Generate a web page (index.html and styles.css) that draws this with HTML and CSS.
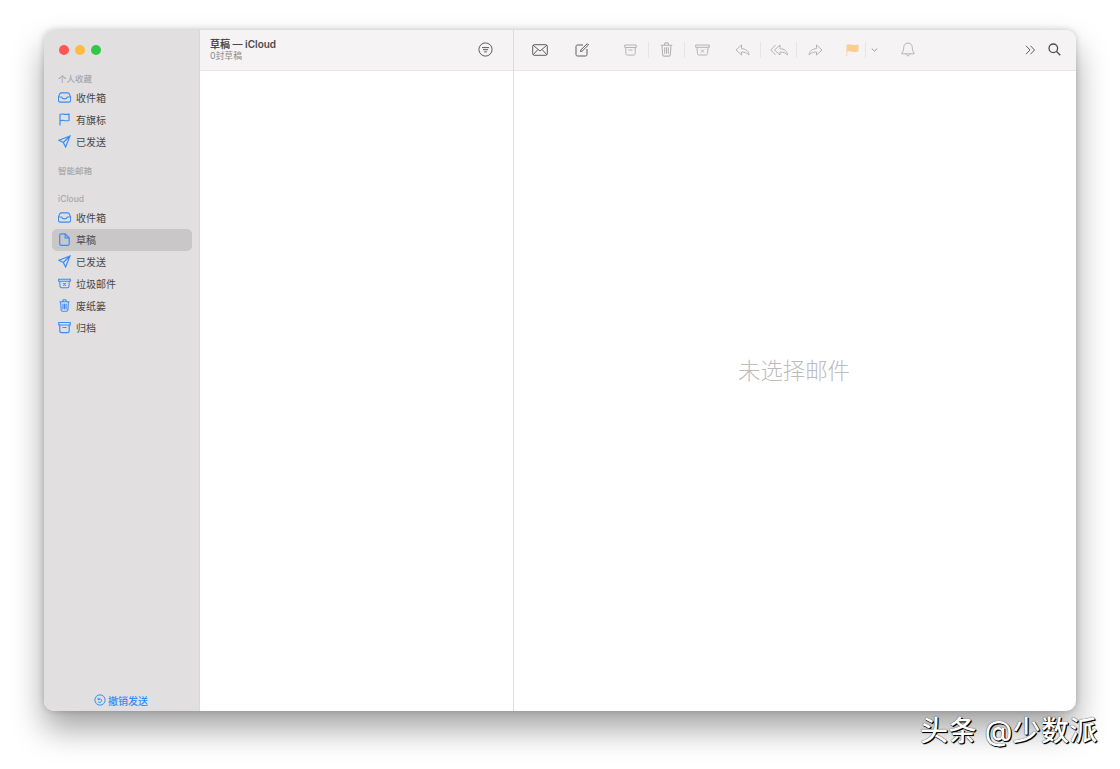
FILE: index.html
```html
<!DOCTYPE html>
<html lang="zh-CN">
<head>
    <meta charset="UTF-8">
    <meta name="viewport" content="width=device-width, initial-scale=1.0">
    <title>草稿 — iCloud</title>
    <link rel="stylesheet" href="styles.css">
</head>
<body>
    <svg class="defs" width="0" height="0">
        <symbol id="i-inbox" viewBox="0 0 14 12">
            <path d="M3.4 1h7.2c.6 0 1 .3 1.3.8l1.6 3.5v3.9c0 1-.7 1.8-1.8 1.8H2.3C1.2 11 .5 10.200.5 9.200V5.300l1.600-3.500C2.400 1.300 2.800 1 3.400 1z"/>
            <path d="M.6 5.500h3.300c.5 1.300 1.600 2 3.100 2s2.600-.7 3.100-2h3.300"/>
        </symbol>
        <symbol id="i-flag" viewBox="0 0 12 13">
            <path d="M1.500 12.500V1.500c1-.5 2-.6 3.200-.4 1.500.3 3 .7 5.800.1v6.300c-2.800.6-4.300.2-5.800-.1-1.200-.2-2.200-.1-3.200.4"/>
        </symbol>
        <symbol id="i-sent" viewBox="0 0 13 13">
            <path d="M12 1L1 5.300l4.300 2.200L7.600 12zM12 1L5.300 7.500"/>
        </symbol>
        <symbol id="i-draft" viewBox="0 0 11 13">
            <path d="M2.300.8h3.900l4 4v5.900c0 1-.6 1.600-1.600 1.600H2.300c-1 0-1.600-.6-1.600-1.600V2.400c0-1 .6-1.600 1.600-1.600zM6.200.8v4h4"/>
        </symbol>
        <symbol id="i-junk" viewBox="0 0 15 12">
            <path d="M.7 1h13.600v2.300H.7zM2 3.300l.4 6.200c.1 1 .7 1.500 1.600 1.500h7c.9 0 1.500-.5 1.600-1.500l.4-6.200M6 5.500l3 3M9 5.500l-3 3"/>
        </symbol>
        <symbol id="i-trash" viewBox="0 0 12 14">
            <path d="M.6 3h10.800M4.200 3V1.800c0-.6.4-1 1-1h1.600c.6 0 1 .4 1 1V3M1.800 3l.6 8.800c.1.8.6 1.400 1.400 1.400h4.400c.8 0 1.300-.6 1.400-1.400l.6-8.800M4.300 5v6M6 5v6M7.700 5v6"/>
        </symbol>
        <symbol id="i-archive" viewBox="0 0 13 12">
            <path d="M.8 1h11.400v2.500H.8zM1.800 3.500v6c0 1 .6 1.600 1.600 1.600h6.200c1 0 1.600-.6 1.600-1.600v-6M4.500 6h4"/>
        </symbol>
        <symbol id="i-reply" viewBox="0 0 15 12">
            <path d="M6.500 1L1 6l5.500 5V8c3.200 0 5.500.8 7.500 3-.4-3.800-3-6.200-7.500-6.300z"/>
        </symbol>
        <symbol id="i-replyall" viewBox="0 0 19 12">
            <path d="M5.500 1L.8 6l4.700 5M10 1L4.500 6l5.500 5V8c3.200 0 5.500.8 7.500 3-.4-3.800-3-6.200-7.500-6.300z"/>
        </symbol>
        <symbol id="i-forward" viewBox="0 0 15 12">
            <path d="M8.500 1L14 6l-5.500 5V8C5.300 8 3 8.800 1 11c.4-3.800 3-6.200 7.500-6.300z"/>
        </symbol>
    </svg>

    <div class="window">
        <aside class="sidebar">
            <div class="traffic">
                <span class="dot red"></span>
                <span class="dot yellow"></span>
                <span class="dot green"></span>
            </div>

            <div class="label first">个人收藏</div>
            <div class="row"><svg class="side-icon"><use href="#i-inbox"/></svg>收件箱</div>
            <div class="row"><svg class="side-icon"><use href="#i-flag"/></svg>有旗标</div>
            <div class="row"><svg class="side-icon"><use href="#i-sent"/></svg>已发送</div>

            <div class="label smart">智能邮箱</div>

            <div class="label cloud">iCloud</div>
            <div class="row"><svg class="side-icon"><use href="#i-inbox"/></svg>收件箱</div>
            <div class="row active"><svg class="side-icon"><use href="#i-draft"/></svg>草稿</div>
            <div class="row"><svg class="side-icon"><use href="#i-sent"/></svg>已发送</div>
            <div class="row"><svg class="side-icon"><use href="#i-junk"/></svg>垃圾邮件</div>
            <div class="row"><svg class="side-icon"><use href="#i-trash"/></svg>废纸篓</div>
            <div class="row"><svg class="side-icon"><use href="#i-archive"/></svg>归档</div>

            <div class="undo">
                <svg class="undo-icon" viewBox="0 0 11 11">
                    <circle cx="5.500" cy="5.500" r="4.700"/>
                    <path d="M3.800 7.300c1 .8 3.200.5 3.200-1.300S4.800 4.200 3.900 5M3.700 3.400V5.100h1.700"/>
                </svg>
                撤销发送
            </div>
        </aside>

        <section class="list">
            <header class="list-head">
                <div class="list-title">
                    <div class="title">草稿 — iCloud</div>
                    <div class="subtitle">0封草稿</div>
                </div>
                <svg class="filter" viewBox="0 0 15 15">
                    <circle cx="7.500" cy="7.500" r="6.600"/>
                    <path d="M4 5.600h7M5 7.700h5M6.200 9.800h2.600"/>
                </svg>
            </header>
        </section>

        <main class="reader">
            <header class="toolbar">
                <svg class="tool dark envelope" viewBox="0 0 16 12">
                    <rect x=".7" y=".7" width="14.600" height="10.600" rx="1.600"/>
                    <path d="M1.200 1.300L8 7l6.800-5.700M1.200 10.800l4.700-5.300M14.800 10.800l-4.700-5.300"/>
                </svg>
                <svg class="tool dark compose" viewBox="0 0 14 14">
                    <path d="M8 2H2.500C1.500 2 1 2.500 1 3.500v8c0 1 .5 1.500 1.500 1.500h8c1 0 1.500-.5 1.500-1.500V6M5.500 8.500l.4-1.700L12.300.7l1.200 1.200-6.300 6.200z"/>
                </svg>

                <div class="group first-group">
                    <svg class="tool faint"><use href="#i-archive" x="4" y="3" width="13" height="12"/></svg>
                    <span class="divider"></span>
                    <svg class="tool faint"><use href="#i-trash" x="4" y="1" width="13" height="15"/></svg>
                    <span class="divider"></span>
                    <svg class="tool faint"><use href="#i-junk" x="2.500" y="3" width="16" height="12"/></svg>
                </div>

                <div class="group reply-group">
                    <svg class="tool faint"><use href="#i-reply" x="3" y="3" width="15" height="12"/></svg>
                    <span class="divider"></span>
                    <svg class="tool faint"><use href="#i-replyall" x="2" y="3" width="19" height="12"/></svg>
                    <span class="divider"></span>
                    <svg class="tool faint"><use href="#i-forward" x="4" y="3" width="15" height="12"/></svg>
                </div>

                <svg class="flag" viewBox="0 0 13 12">
                    <path d="M.5 12V.8C2 .2 3.500.1 5 .5c2.500.6 4.500.8 7.500.1v7c-3 .7-5 .5-7.500-.1-1.500-.4-2.700-.3-3.800.2V12z"/>
                </svg>
                <span class="divider flag-div"></span>
                <svg class="chevron" viewBox="0 0 7 4"><path d="M.8.6L3.500 3.200 6.200.6"/></svg>
                <svg class="tool faint bell" viewBox="0 0 14 15">
                    <path d="M7 1c-2.700 0-4.200 2-4.300 4.500-.1 2.700-.5 4-1.900 5.700-.2.300 0 .6.300.6h11.800c.3 0 .5-.3.300-.6-1.400-1.700-1.800-3-1.900-5.700C11.200 3 9.700 1 7 1zM5.300 11.900c.1 1.100.8 1.900 1.700 1.900s1.600-.8 1.700-1.900"/>
                </svg>

                <div class="spacer"></div>
                <svg class="more" viewBox="0 0 11 10"><path d="M1 .8L5 5 1 9.200M5.500.8L9.500 5 5.500 9.200"/></svg>
                <svg class="search" viewBox="0 0 13 13"><circle cx="5.300" cy="5.300" r="4.300"/><path d="M8.500 8.500l3.800 3.800"/></svg>
            </header>
            <div class="empty">未选择邮件</div>
        </main>
    </div>

    <div class="watermark">头条 @少数派</div>
</body>
</html>
```

FILE: styles.css
```css
* {
    box-sizing: border-box;
}
html, body {
    margin: 0;
    height: 100%;
    overflow: hidden;
}
body {
    padding: 30px 44px 58px;
    background-color: #fff;
    font-family: "Inter", "Noto Sans CJK SC", sans-serif;
}
.defs {
    position: absolute;
}
.window {
    display: flex;
    height: 681px;
    border-radius: 10px;
    overflow: hidden;
    background-color: #fff;
    box-shadow: 0 18px 32px rgba(0, 0, 0, 0.36), 0 0 6px rgba(0, 0, 0, 0.2);
}

/* sidebar */
.sidebar {
    display: flex;
    flex-direction: column;
    flex: none;
    width: 156px;
    padding: 0 7px 0 8px;
    background-color: #e1dfe0;
    border-right: 1px solid #d9d7d8;
}
.traffic {
    display: flex;
    gap: 6px;
    height: 13px;
    margin: 15px 0 0 7px;
}
.dot {
    width: 10px;
    height: 10px;
    border-radius: 50%;
}
.red { background-color: #fc5753; }
.yellow { background-color: #fdbc40; }
.green { background-color: #33c748; }
.label {
    height: 12px;
    padding-left: 6px;
    font-size: 8.500px;
    line-height: 12px;
    font-weight: 500;
    color: #a9a7a8;
}
.label.first { margin-top: 15px; margin-bottom: 2px; }
.label.smart { margin-top: 12px; }
.label.cloud { margin-top: 16px; margin-bottom: 2px; }
.row {
    display: flex;
    align-items: center;
    height: 22px;
    padding: 0 0 1px 6px;
    border-radius: 5px;
    font-size: 10px;
    color: #4a4849;
}
.row.active {
    background-color: #c9c7c8;
}
.side-icon {
    flex: none;
    width: 13px;
    height: 13px;
    margin-right: 5px;
    fill: none;
    stroke: #3d8cf2;
    stroke-width: 1.200;
}
.undo {
    display: flex;
    align-items: center;
    justify-content: center;
    gap: 2px;
    margin-top: auto;
    height: 20px;
    margin-bottom: 1px;
    padding-right: 2px;
    font-size: 10px;
    font-weight: 500;
    color: #2f8ff5;
}
.undo-icon {
    width: 12px;
    height: 12px;
    fill: none;
    stroke: #2f8ff5;
    stroke-width: 0.9;
}

/* message list */
.list {
    flex: none;
    width: 314px;
    border-right: 1px solid #dddcdc;
}
.list-head {
    display: flex;
    align-items: center;
    justify-content: space-between;
    height: 41px;
    padding: 0 20px 1px 10px;
    background-color: #f5f3f4;
    border-bottom: 1px solid #e6e5e5;
}
.title {
    font-size: 10px;
    line-height: 12px;
    font-weight: 600;
    color: #4b494a;
}
.subtitle {
    margin-top: 1px;
    font-size: 8.800px;
    line-height: 10px;
    color: #8f8d8e;
}
.filter {
    width: 15px;
    height: 15px;
    fill: none;
    stroke: #5e5c5d;
    stroke-width: 1;
}

/* reader */
.reader {
    display: flex;
    flex-direction: column;
    flex: 1;
}
.toolbar {
    display: flex;
    align-items: center;
    flex: none;
    height: 41px;
    padding: 0 15px 1px 18px;
    background-color: #f5f3f4;
    border-bottom: 1px solid #e6e5e5;
}
.tool {
    flex: none;
    width: 21px;
    height: 18px;
    fill: none;
    stroke-width: 1;
}
.dark { stroke: #5e5c5d; }
.faint { stroke: #b5b3b4; }
.envelope { width: 16px; height: 12px; }
.compose { width: 14px; height: 14px; margin-left: 27px; }
.group {
    display: flex;
    align-items: center;
    gap: 7px;
}
.first-group { margin-left: 31px; }
.reply-group { margin-left: 19px; }
.divider {
    flex: none;
    width: 1px;
    height: 16px;
    background-color: #e6e4e5;
}
.flag {
    width: 13px;
    height: 12px;
    margin-left: 21px;
    fill: #f9cf8d;
}
.flag-div { margin-left: 6px; }
.chevron {
    width: 7px;
    height: 4px;
    margin-left: 5px;
    fill: none;
    stroke: #9a9899;
    stroke-width: 1;
}
.bell {
    width: 14px;
    height: 15px;
    margin-left: 23px;
}
.spacer {
    flex: 1;
}
.more {
    width: 11px;
    height: 10px;
    fill: none;
    stroke: #5e5c5d;
    stroke-width: 1;
}
.search {
    width: 13px;
    height: 13px;
    margin-left: 12px;
    fill: none;
    stroke: #4f4d4e;
    stroke-width: 1.300;
}
.empty {
    display: flex;
    align-items: center;
    justify-content: center;
    flex: 1;
    padding: 0 2px 44px 0;
    font-size: 22.400px;
    font-weight: 300;
    color: #bdbcbc;
}

/* sits on top of the picture */
.watermark {
    position: absolute;
    left: 920px;
    top: 712px;
    font-size: 28px;
    line-height: 38px;
    font-weight: 500;
    letter-spacing: 0.4px;
    white-space: nowrap;
    color: #fff;
    text-shadow: 1px 1px 1px #000, 1px 1px 0 #000, 0 0 1px #000;
}
```
